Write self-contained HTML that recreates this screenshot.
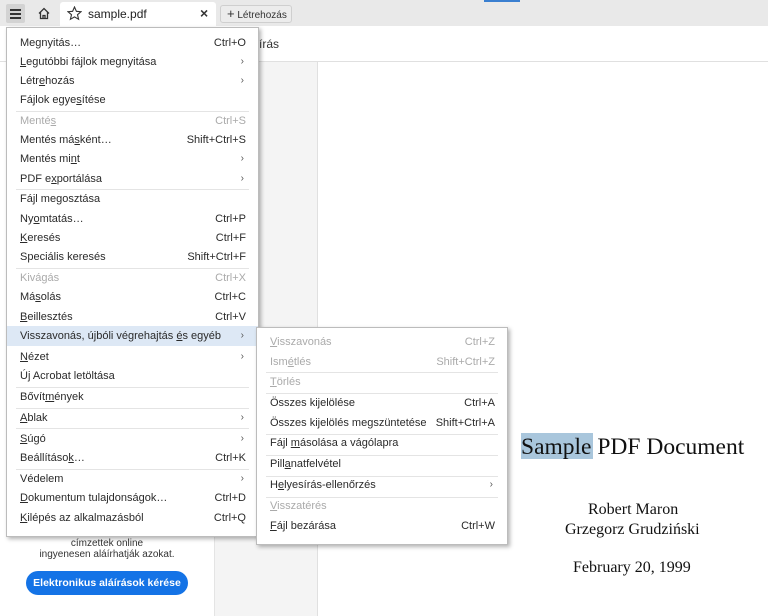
<!DOCTYPE html>
<html><head><meta charset="utf-8"><style>
*{margin:0;padding:0;box-sizing:border-box}
body{width:768px;height:616px;overflow:hidden;position:relative;background:#fff;font-family:"Liberation Sans",sans-serif;font-size:11px;color:#222}
.abs{position:absolute}
.menu{position:absolute;background:#fff;border:1px solid #bcbcbc;box-shadow:2px 2px 4px rgba(0,0,0,.3);color:#2a2a2a}
.it{position:absolute;left:0;right:0;height:20px;line-height:20px;padding-left:13px;white-space:nowrap}
.it .k{position:absolute;right:12px;top:0}
.it .a{position:absolute;right:14px;top:0;font-size:10px;color:#555}
.dis{color:#aaa}
.sep{position:absolute;left:9px;right:9px;height:1px;background:#e4e4e4}
u{text-decoration:underline}
.serif{font-family:"Liberation Serif",serif;color:#111;position:absolute;white-space:nowrap}
</style></head><body>
<div class="abs" style="left:0;top:0;width:768px;height:26px;background:#e9e9e9"></div>
<div class="abs" style="left:484px;top:0;width:36px;height:2px;background:#3a7fd0"></div>
<div class="abs" style="left:6px;top:4px;width:19px;height:19px;background:#d3d3d3;border-radius:2px"></div>
<div class="abs" style="left:10px;top:9px;width:11px;height:1.5px;background:#333;box-shadow:0 4px 0 #333,0 8px 0 #333"></div>
<svg class="abs" style="left:37px;top:7px" width="14" height="13" viewBox="0 0 14 13"><path d="M2 6.5L7 1.5L12 6.5M3.5 5V11.5H10.5V5M6 11.5V8.5H8V11.5" fill="none" stroke="#333" stroke-width="1.3"/></svg>
<div class="abs" style="left:60px;top:2px;width:156px;height:24px;background:#fff;border-radius:3px 3px 0 0"></div>
<svg class="abs" style="left:67px;top:6px" width="15" height="15" viewBox="0 0 15 15"><path d="M7.5 1L9.4 5.3L14 5.7L10.5 8.7L11.6 13.3L7.5 10.9L3.4 13.3L4.5 8.7L1 5.7L5.6 5.3Z" fill="none" stroke="#333" stroke-width="1.1"/></svg>
<div class="abs" style="left:88px;top:7px;font-size:12px;color:#222">sample.pdf</div>
<div class="abs" style="left:200px;top:5px;font-size:14px;color:#333;font-weight:bold">×</div>
<div class="abs" style="left:220px;top:5px;width:72px;height:18px;border:1px solid #cfcfcf;border-radius:3px;background:#ececec;font-size:10px;line-height:16px;padding-left:6px;color:#333"><b style="font-size:13px;font-weight:normal">+</b> Létrehozás</div>
<div class="abs" style="left:0;top:61px;width:768px;height:1px;background:#e0e0e0"></div>
<div class="abs" style="left:259px;top:37px;font-size:12px;color:#333">írás</div>
<div class="abs" style="left:214px;top:62px;width:104px;height:554px;background:#f4f4f4;border-left:1px solid #e4e4e4;border-right:1px solid #e0e0e0"></div>
<div class="abs" style="left:0;top:538px;width:214px;text-align:center;font-size:10px;line-height:11px;color:#333">címzettek online<br>ingyenesen aláírhatják azokat.</div>
<div class="abs" style="left:26px;top:571px;width:162px;height:24px;border-radius:12px;background:#1473e6;color:#fff;font-weight:bold;font-size:10.5px;line-height:24px;text-align:center">Elektronikus aláírások kérése</div>
<div class="abs" style="left:521px;top:433px;width:72px;height:26px;background:#a9c6dc"></div>
<div class="serif" style="left:521px;top:434px;font-size:23.5px">Sample PDF Document</div>
<div class="serif" style="left:588px;top:501px;font-size:16px">Robert Maron</div>
<div class="serif" style="left:565px;top:521px;font-size:16px">Grzegorz Grudziński</div>
<div class="serif" style="left:573px;top:559px;font-size:16px">February 20, 1999</div>

<div class="menu" style="left:6px;top:27px;width:253px;height:510px">
<div class="it" style="top:5px">Megnyitás…<span class="k">Ctrl+O</span></div>
<div class="it" style="top:24px"><u>L</u>egutóbbi fájlok megnyitása<span class="a">›</span></div>
<div class="it" style="top:43px">Létr<u>e</u>hozás<span class="a">›</span></div>
<div class="it" style="top:62px">Fájlok egye<u>s</u>ítése</div>
<div class="sep" style="top:83px"></div>
<div class="it dis" style="top:83px">Menté<u>s</u><span class="k">Ctrl+S</span></div>
<div class="it" style="top:102px">Mentés má<u>s</u>ként…<span class="k">Shift+Ctrl+S</span></div>
<div class="it" style="top:121px">Mentés mi<u>n</u>t<span class="a">›</span></div>
<div class="it" style="top:141px">PDF e<u>x</u>portálása<span class="a">›</span></div>
<div class="sep" style="top:161px"></div>
<div class="it" style="top:161px">Fá<u>j</u>l megosztása</div>
<div class="it" style="top:181px">Ny<u>o</u>mtatás…<span class="k">Ctrl+P</span></div>
<div class="it" style="top:200px"><u>K</u>eresés<span class="k">Ctrl+F</span></div>
<div class="it" style="top:219px">Speciális keresés<span class="k">Shift+Ctrl+F</span></div>
<div class="sep" style="top:240px"></div>
<div class="it dis" style="top:240px">Kivá<u>g</u>ás<span class="k">Ctrl+X</span></div>
<div class="it" style="top:259px">Má<u>s</u>olás<span class="k">Ctrl+C</span></div>
<div class="it" style="top:279px"><u>B</u>eillesztés<span class="k">Ctrl+V</span></div>
<div class="it" style="top:298px;background:#dde8f5">Visszavonás, újbóli végrehajtás <u>é</u>s egyéb<span class="a">›</span></div>
<div class="it" style="top:319px"><u>N</u>ézet<span class="a">›</span></div>
<div class="it" style="top:338px">Új Acrobat letöltása</div>
<div class="sep" style="top:359px"></div>
<div class="it" style="top:359px">Bővít<u>m</u>ények</div>
<div class="sep" style="top:380px"></div>
<div class="it" style="top:380px"><u>A</u>blak<span class="a">›</span></div>
<div class="sep" style="top:400px"></div>
<div class="it" style="top:401px"><u>S</u>úgó<span class="a">›</span></div>
<div class="it" style="top:420px">Beállításo<u>k</u>…<span class="k">Ctrl+K</span></div>
<div class="sep" style="top:441px"></div>
<div class="it" style="top:441px">Védelem<span class="a">›</span></div>
<div class="it" style="top:460px"><u>D</u>okumentum tulajdonságok…<span class="k">Ctrl+D</span></div>
<div class="it" style="top:480px"><u>K</u>ilépés az alkalmazásból<span class="k">Ctrl+Q</span></div>
</div>

<div class="menu" style="left:256px;top:327px;width:252px;height:218px">
<div class="it dis" style="top:4px"><u>V</u>isszavonás<span class="k">Ctrl+Z</span></div>
<div class="it dis" style="top:24px">Ism<u>é</u>tlés<span class="k">Shift+Ctrl+Z</span></div>
<div class="sep" style="top:44px"></div>
<div class="it dis" style="top:44px"><u>T</u>örlés</div>
<div class="sep" style="top:65px"></div>
<div class="it" style="top:65px">Összes kijelölése<span class="k">Ctrl+A</span></div>
<div class="it" style="top:85px">Összes kijelölés megszüntetése<span class="k">Shift+Ctrl+A</span></div>
<div class="sep" style="top:106px"></div>
<div class="it" style="top:105px">Fájl <u>m</u>ásolása a vágólapra</div>
<div class="sep" style="top:127px"></div>
<div class="it" style="top:126px">Pill<u>a</u>natfelvétel</div>
<div class="sep" style="top:148px"></div>
<div class="it" style="top:147px">H<u>e</u>lyesírás-ellenőrzés<span class="a">›</span></div>
<div class="sep" style="top:169px"></div>
<div class="it dis" style="top:168px"><u>V</u>isszatérés</div>
<div class="it" style="top:188px"><u>F</u>ájl bezárása<span class="k">Ctrl+W</span></div>
</div>
</body></html>
